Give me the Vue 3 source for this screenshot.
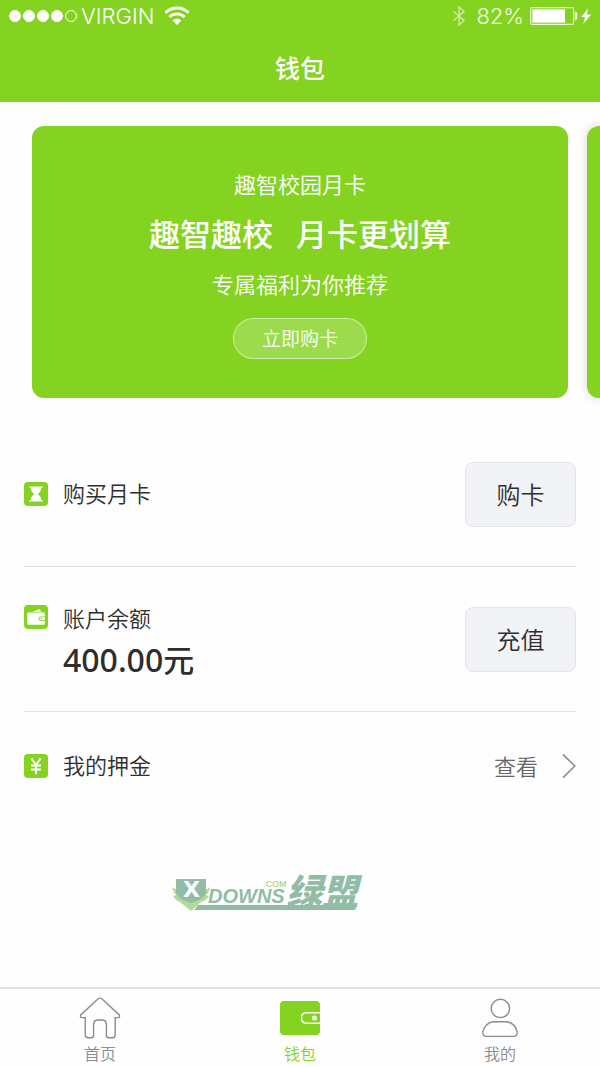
<script setup>
const promos = [
  { kicker: '趣智校园月卡', titleA: '趣智趣校', titleB: '月卡更划算', note: '专属福利为你推荐', action: '立即购卡' },
]
const signal = [true, true, true, true, false]
</script>

<template>
  <div class="page">
    <header class="top">
      <div class="status">
        <div class="status-side">
          <span class="dots">
            <i v-for="(on, n) in signal" :key="n" :class="['dot', { on }]"></i>
          </span>
          <span class="carrier">VIRGIN</span>
          <svg class="wifi" width="26" height="20" viewBox="0 0 26 20" aria-hidden="true">
            <g fill="none" stroke="#fff" stroke-width="2.8">
              <path d="M1.4 6.8C8 .4 18 .4 24.6 6.8" />
              <path d="M5.4 11C9.8 6.8 16.2 6.8 20.6 11" />
            </g>
            <path d="M8.6 14.4c2.6-2.3 6.2-2.3 8.8 0L13 19z" fill="#fff" />
          </svg>
        </div>
        <div class="status-side">
          <svg class="bluetooth" width="14" height="22" viewBox="0 0 14 22" aria-hidden="true">
            <path d="M1.5 6.2 12 15.6 7 20V2l5 4.4L1.5 15.8" fill="none" stroke="#fff" stroke-opacity=".55" stroke-width="1.5" />
          </svg>
          <span class="percent">82%</span>
          <svg width="62" height="20" viewBox="0 0 62 20" aria-hidden="true">
            <rect x=".7" y="1.7" width="43" height="16.6" rx="1.5" fill="none" stroke="#fff" stroke-opacity=".85" stroke-width="1.2" />
            <rect x="2.4" y="3.4" width="32.6" height="13.2" fill="#fff" />
            <path d="M45 6.2h1.4q.8 0 .8 1v5.6q0 1-.8 1H45z" fill="#fff" />
            <path d="M58 2.600 51.200 11h4l-2 7 8-9.400h-4.200z" fill="#fff" />
          </svg>
        </div>
      </div>
      <h1 class="title">钱包</h1>
    </header>

    <main class="content">
      <section class="strip">
        <article v-for="p in promos" :key="p.kicker" class="card">
          <p class="card-text">{{ p.kicker }}</p>
          <h2 class="card-title"><span>{{ p.titleA }}</span><span>{{ p.titleB }}</span></h2>
          <p class="card-text">{{ p.note }}</p>
          <button class="pill" type="button">{{ p.action }}</button>
        </article>
        <article class="card next"></article>
      </section>

      <section class="rows">
        <div class="row">
          <svg class="icon" width="24" height="24" viewBox="0 0 24 24" aria-hidden="true">
            <rect width="24" height="24" rx="4" fill="#84d320" />
            <path d="M5.4 4.6h13.2v1.2h-1.2c-.4 3-1.7 4.8-3.6 6.2 1.9 1.4 3.2 3.2 3.6 6.2h1.2v1.2H5.4v-1.2h1.2c.4-3 1.7-4.8 3.6-6.2-1.9-1.4-3.2-3.2-3.6-6.2H5.4z" fill="#fff" />
          </svg>
          <div class="info"><div class="label">购买月卡</div></div>
          <button class="action" type="button">购卡</button>
        </div>
        <div class="row">
          <svg class="icon first-line" width="24" height="24" viewBox="0 0 24 24" aria-hidden="true">
            <rect width="24" height="24" rx="4" fill="#84d320" />
            <path d="M8.5 7 14.8 4.3q.9-.3 1.3.5L17 7z" fill="#fff" />
            <path d="M4.5 7.6h15.2q1.2 0 1.2 1.2v2.600h-4.200a2.300 2.300 0 0 0 0 4.600h4.200v2.600q0 1.200-1.200 1.200H4.500q-1.300 0-1.300-1.300V8.900q0-1.300 1.300-1.300z" fill="#fff" />
            <path d="M16.900 12.200h4v3h-4a1.500 1.500 0 0 1 0-3z" fill="#fff" />
            <circle cx="17.500" cy="13.700" r=".8" fill="#84d320" />
          </svg>
          <div class="info">
            <div class="label">账户余额</div>
            <div class="amount">400.00<span class="unit">元</span></div>
          </div>
          <button class="action" type="button">充值</button>
        </div>
        <div class="row short">
          <svg class="icon" width="24" height="24" viewBox="0 0 24 24" aria-hidden="true">
            <rect width="24" height="24" rx="4" fill="#84d320" />
            <path d="M7.4 4.4 12 11l4.6-6.600M12 11v9.200M7 11.600h10M7 15.400h10" fill="none" stroke="#fff" stroke-width="2" />
          </svg>
          <div class="info"><div class="label">我的押金</div></div>
          <a class="more" href="#">
            <span class="more-text">查看</span>
            <svg width="14" height="26" viewBox="0 0 14 26" aria-hidden="true">
              <path d="M1 1.4 12.8 13 1 24.6" fill="none" stroke="#8a8a8a" stroke-width="1.5" />
            </svg>
          </a>
        </div>
      </section>

      <svg class="brand" width="200" height="44" viewBox="0 0 200 44" role="img" aria-label="XDOWNS.COM 绿盟">
        <path d="M2 16q4 3 6 3V10h26v9q3 0 6-3-1 6-4 8 1 1 3 1-3 5-8 6L21 40 10 31q-5-2-7-6 2 0 3-1-3-3-4-8z" fill="#b2dc93" />
        <path d="M6 8h30v14q-2 6-15 10Q8 28 6 22z" fill="#91bda6" />
        <path d="M24 39 28 34H187l-2 5z" fill="#91bda6" />
        <text class="brand-x" x="13" y="26">X</text>
        <text class="brand-name" x="38" y="32">DOWNS</text>
        <text class="brand-com" x="93" y="16">.COM</text>
        <text class="brand-cn" x="116" y="34">绿盟</text>
      </svg>
    </main>

    <nav class="tabs">
      <a class="tab" href="#">
        <svg width="42" height="42" viewBox="0 0 42 42" aria-hidden="true">
          <path d="M19.2 1.8q1.8-1.3 3.6 0L40.3 18q.7 2.6-.8 2.6h-3.300V38q0 2.800-2.800 2.800h-3.200q-2.800 0-2.800-2.800V27.500q0-4.500-4.400-4.500h-4q-4.400 0-4.400 4.500V38q0 2.800-2.800 2.800H9.500q-3.300 0-3.300-2.800V20.600H2.500q-1.500 0-.8-2.600z" fill="none" stroke="#8c8c8c" stroke-width="1.4" />
        </svg>
        <span>首页</span>
      </a>
      <a class="tab active" href="#" aria-current="page">
        <svg width="42" height="42" viewBox="0 0 42 42" aria-hidden="true">
          <path d="M5 4h32q4 0 4 4v26q0 4-4 4H5q-4 0-4-4V8q0-4 4-4z" fill="#84d320" />
          <path d="M41 15.8H27.5q-5 0-5 5.2t5 5.2H41" fill="none" stroke="#fff" stroke-width="1.5" />
          <circle cx="35.5" cy="21" r="2.5" fill="#fff" />
        </svg>
        <span>钱包</span>
      </a>
      <a class="tab" href="#">
        <svg width="42" height="42" viewBox="0 0 42 42" aria-hidden="true">
          <g fill="none" stroke="#8c8c8c" stroke-width="1.4">
            <circle cx="21.4" cy="11.4" r="9.2" />
            <path d="M14 24.8h14q8 1.4 10 9.6.8 5-3.4 5H7.400q-4.200 0-3.400-5 2-8.200 10-9.600z" />
          </g>
        </svg>
        <span>我的</span>
      </a>
    </nav>
  </div>
</template>

<style>
body { margin: 0; background: #fff; }
</style>

<style scoped>
.page {
  min-height: 100vh;
  display: flex;
  flex-direction: column;
  background: #fefefe;
  color: #2e2e2e;
  font-family: "Noto Sans CJK SC", "Noto Sans", sans-serif;
}
h1, h2, p { margin: 0; font-weight: 400; }
svg { display: block; flex: none; }
a { color: inherit; text-decoration: none; }
button { font-family: inherit; cursor: pointer; padding: 0 0 2px; }

.top { height: 102px; background: #84d320; color: #fff; }
.status {
  height: 32px;
  padding: 0 8px 0 9px;
  display: flex;
  justify-content: space-between;
  align-items: center;
  font-family: Inter, "Liberation Sans", sans-serif;
  font-size: 22px;
  font-weight: 300;
}
.status-side { display: flex; align-items: center; }
.dots { display: flex; gap: 2px; margin-right: 4px; }
.dot { box-sizing: border-box; width: 12px; height: 12px; border: 1px solid #fff; border-radius: 50%; }
.dot.on { background: #fff; }
.carrier { margin-right: 10px; }
.bluetooth { margin-right: 10px; }
.percent { margin-right: 6px; opacity: .9; }
.title { line-height: 70px; font-size: 25px; font-weight: 500; text-align: center; }

.content { flex: 1; }
.strip { display: flex; gap: 19px; padding: 24px 32px; overflow: hidden; }
.card {
  box-sizing: border-box;
  flex: 0 0 100%;
  min-height: 272px;
  padding: 38px 0;
  border-radius: 12px;
  background: #84d320;
  color: #fff;
  display: flex;
  flex-direction: column;
  align-items: center;
}
.next { box-shadow: 0 0 10px rgba(0, 0, 0, .16); }
.card-text { font-size: 22px; line-height: 38px; font-weight: 350; }
.card-title { display: flex; gap: 23px; font-size: 31px; line-height: 62px; font-weight: 500; }
.pill {
  width: 134px;
  height: 41px;
  margin-top: 16px;
  border: 1px solid rgba(255, 255, 255, .5);
  border-radius: 21px;
  background: rgba(255, 255, 255, .2);
  color: #fff;
  font-size: 19px;
  font-weight: 350;
}

.rows { padding: 0 24px; }
.row {
  box-sizing: border-box;
  min-height: 145px;
  display: flex;
  align-items: center;
  border-bottom: 1px solid #e4e4e4;
}
.row.short { min-height: 108px; border-bottom: 0; }
.icon { margin-right: 15px; }
.first-line { align-self: flex-start; margin-top: 38px; }
.info { flex: 1; }
.label { padding-bottom: 3px; font-size: 22px; line-height: 37px; font-weight: 350; }
.amount { font-family: "Noto Sans", "Noto Sans CJK SC", sans-serif; font-size: 32px; line-height: 40px; font-weight: 500; }
.unit { font-family: "Noto Sans CJK SC", sans-serif; font-size: 31px; }
.action {
  width: 111px;
  height: 65px;
  border: 1px solid #e4e5e8;
  border-radius: 8px;
  background: #f2f3f7;
  color: #2e2e2e;
  font-size: 24px;
  font-weight: 350;
}
.more { display: flex; align-items: center; gap: 24px; font-size: 22px; font-weight: 350; color: #666; }
.more-text { padding-bottom: 3px; }

.brand { margin: 51px 0 0 170px; overflow: visible; }
.brand text { font-family: "Liberation Sans", Arial, sans-serif; font-weight: 700; fill: #91bda6; }
.brand .brand-x { font-family: "DejaVu Sans", sans-serif; font-size: 22px; fill: #fff; }
.brand .brand-name { font-size: 20px; font-style: italic; }
.brand .brand-com { font-size: 9px; fill: #b2dc93; }
.brand .brand-cn { font-family: "Noto Sans CJK SC", sans-serif; font-size: 36px; font-weight: 900; font-style: italic; }

.tabs {
  box-sizing: border-box;
  min-height: 80px;
  display: flex;
  border-top: 2px solid #e2e2e2;
  padding-top: 8px;
}
.tab { flex: 1; display: flex; flex-direction: column; align-items: center; color: #8c8c8c; font-size: 16px; line-height: 28px; font-weight: 350; }
.active { color: #84d320; }
</style>
